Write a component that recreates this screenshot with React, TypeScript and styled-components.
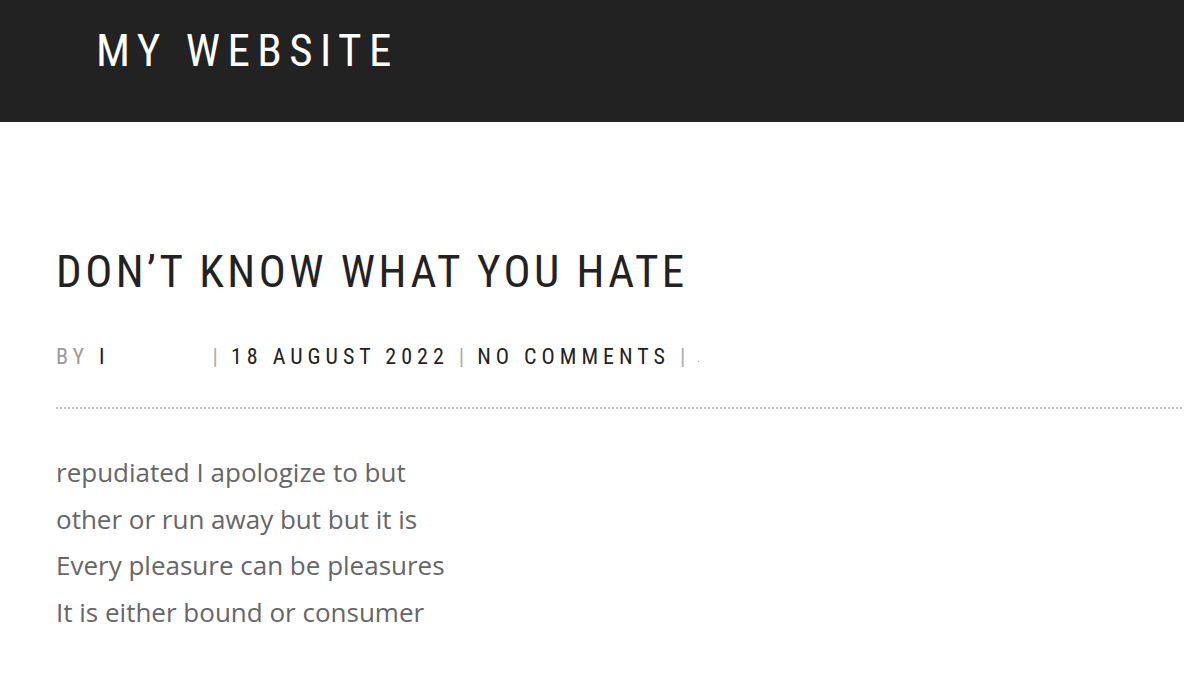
import React from "react";
import styled, { createGlobalStyle } from "styled-components";

const Global = createGlobalStyle`
  html, body { margin: 0; padding: 0; background: #fff; overflow: hidden; }
  body { font-family: "Open Sans", sans-serif; }
`;

const Header = styled.header`
  height: 122px;
  background: #222222;
  display: flex;
  align-items: flex-start;
  padding-left: 96px;
  box-sizing: border-box;
`;

const Logo = styled.div`
  font-family: "Roboto Condensed", Roboto, sans-serif;
  font-weight: 400;
  font-size: 45px;
  line-height: 1;
  letter-spacing: 7.45px;
  color: #fff;
  margin-top: 28px;
`;

const Main = styled.main`
  padding: 0 0 0 56px;
`;

const Title = styled.h1`
  margin: 127px 0 0;
  font-family: "Roboto Condensed", Roboto, sans-serif;
  font-weight: 400;
  font-size: 45px;
  line-height: 1;
  letter-spacing: 3.5px;
  color: #222;
  white-space: nowrap;
`;

const Meta = styled.div`
  margin-top: 52px;
  display: flex;
  align-items: center;
  font-family: "Roboto Condensed", Roboto, sans-serif;
  font-size: 22px;
  line-height: 1;
  letter-spacing: 5px;
  color: #222;
  white-space: nowrap;
`;

const Muted = styled.span`
  color: #9a9a9a;
`;

const Sep = styled.span`
  color: #aaa;
  margin: 0 13px 0 10px;
  letter-spacing: 0;
`;

const Gap = styled.span<{ $w: number }>`
  display: inline-block;
  width: ${(p) => p.$w}px;
`;

const Dot = styled.span`
  display: inline-block;
  width: 1px;
  height: 1px;
  background: #aaa;
  margin-top: 8px;
`;

const Rule = styled.div`
  margin-top: 39px;
  height: 2px;
  background-image: repeating-linear-gradient(
    to right,
    #c4c4c4 0 2px,
    transparent 2px 4px
  );
`;

const Body = styled.div`
  margin-top: 40px;
  font-family: "Open Sans", sans-serif;
  font-size: 26px;
  line-height: 46.7px;
  color: #666;
`;

const Line = styled.p`
  margin: 0;
`;

export default function App() {
  return (
    <>
      <Global />
      <Header>
        <Logo>MY WEBSITE</Logo>
      </Header>
      <Main>
        <Title>DON’T KNOW WHAT YOU HATE</Title>
        <Meta>
          <Muted>BY</Muted>&nbsp;I
          <Gap $w={93} />
          <Sep>|</Sep>18 AUGUST 2022<Sep>|</Sep>NO COMMENTS<Sep>|</Sep>
          <Dot />
        </Meta>
        <Rule />
        <Body>
          <Line>repudiated I apologize to but</Line>
          <Line>other or run away but but it is</Line>
          <Line>Every pleasure can be pleasures</Line>
          <Line>It is either bound or consumer</Line>
        </Body>
      </Main>
    </>
  );
}
